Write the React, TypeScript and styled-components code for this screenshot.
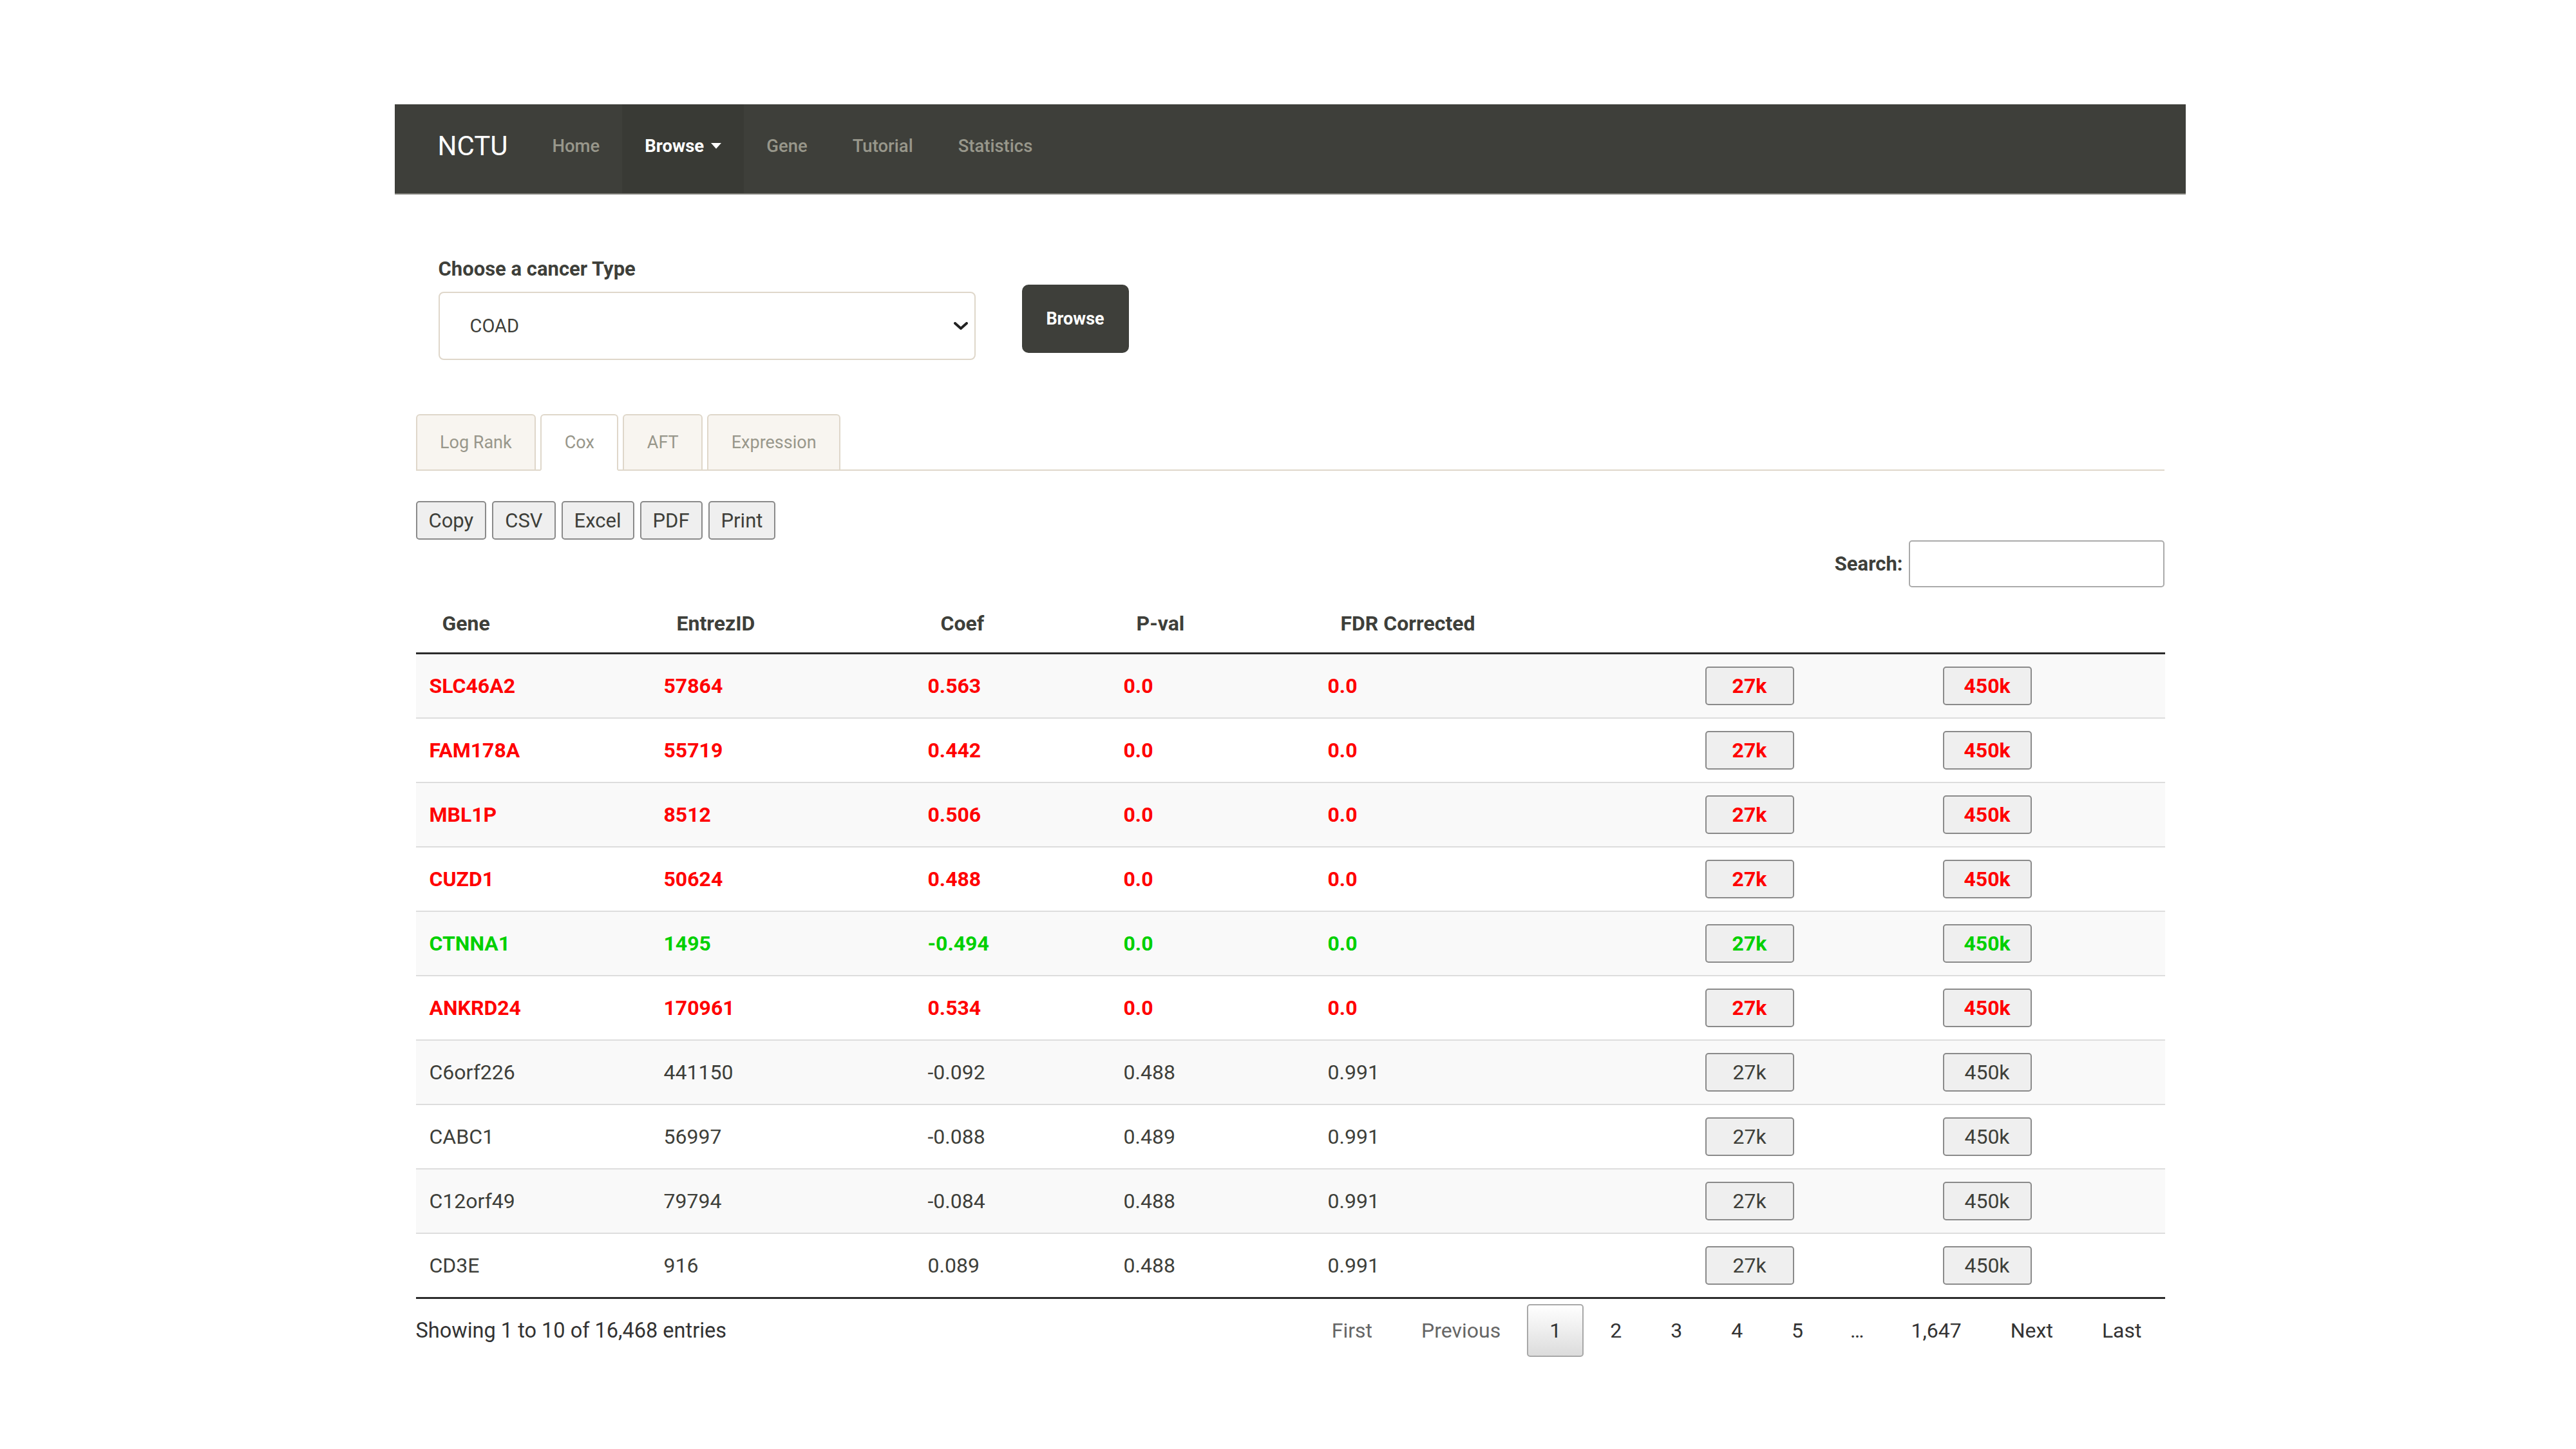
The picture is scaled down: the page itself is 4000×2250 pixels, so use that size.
import React from 'react';
import styled, { createGlobalStyle, css } from 'styled-components';

const GlobalStyle = createGlobalStyle`
  html, body {
    margin: 0;
    padding: 0;
    background: #ffffff;
  }
  body {
    font-family: Roboto, "Liberation Sans", Arial, sans-serif;
    font-size: 32px;
    color: #3e3f3a;
  }
  * {
    box-sizing: border-box;
  }
`;

const Page = styled.div`
  width: 2781px;
  margin: 0 auto;
  padding: 162px 0 120px;
  position: relative;
  left: 3px;
`;

/* ---------- navbar ---------- */

const Navbar = styled.nav`
  display: flex;
  align-items: stretch;
  height: 140px;
  padding-left: 33px;
  background: #3e3f3a;
  border-bottom: 2px solid #7d7d77;
`;

const Brand = styled.a`
  display: flex;
  align-items: center;
  padding: 0 34px 10px 34px;
  font-size: 42px;
  color: #ffffff;
  text-decoration: none;
`;

const NavLink = styled.a<{ $active?: boolean }>`
  display: flex;
  align-items: center;
  padding: 0 35px 10px;
  font-size: 27.5px;
  font-weight: 500;
  color: #98978b;
  text-decoration: none;
  ${(p) =>
    p.$active &&
    css`
      background: #393a35;
      color: #ffffff;
      font-weight: 700;
    `}
`;

const Caret = styled.span`
  display: inline-block;
  margin-left: 11px;
  border-top: 9px solid #ffffff;
  border-left: 8px solid transparent;
  border-right: 8px solid transparent;
`;

/* ---------- content ---------- */

const Main = styled.main`
  padding: 0 33px;
`;

const ChooseRow = styled.div`
  display: flex;
  align-items: flex-start;
  padding: 94px 0 0 35px;
`;

const Field = styled.div`
  display: flex;
  flex-direction: column;
`;

const Label = styled.label`
  font-size: 31px;
  font-weight: 700;
  line-height: 43px;
  color: #3e3f3a;
  margin-bottom: 14px;
`;

const SelectWrap = styled.div`
  position: relative;
  width: 834px;
  height: 106px;
`;

const Select = styled.select`
  appearance: none;
  width: 100%;
  height: 100%;
  padding: 0 60px 0 47px;
  font-family: Roboto, "Liberation Sans", Arial, sans-serif;
  font-size: 29px;
  color: #3e3f3a;
  background: #ffffff;
  border: 2px solid #dfd7ca;
  border-radius: 8px;
  outline: none;
`;

const Chevron = styled.svg`
  position: absolute;
  right: 12px;
  top: 47px;
  width: 22px;
  height: 12px;
  pointer-events: none;
`;

const BrowseButton = styled.button`
  margin: 46px 0 0 72px;
  width: 166px;
  height: 106px;
  border: none;
  border-radius: 10px;
  background: #3e3f3a;
  color: #ffffff;
  font-family: Roboto, "Liberation Sans", Arial, sans-serif;
  font-size: 27px;
  font-weight: 700;
`;

const Tabs = styled.ul`
  display: flex;
  gap: 7px;
  list-style: none;
  margin: 84px 0 0;
  padding: 0;
  border-bottom: 2px solid #dfd7ca;
`;

const Tab = styled.li<{ $active?: boolean }>`
  display: flex;
  align-items: center;
  height: 88px;
  margin-bottom: -2px;
  padding: 0 35.5px;
  font-size: 27px;
  color: #98978b;
  background: ${(p) => (p.$active ? '#ffffff' : '#f8f5f0')};
  border: 2px solid #dfd7ca;
  border-bottom-color: ${(p) => (p.$active ? '#ffffff' : '#dfd7ca')};
  border-radius: 6px 6px 0 0;
`;

const ExportBar = styled.div`
  display: flex;
  gap: 9px;
  margin-top: 47px;
`;

const NativeButton = styled.button`
  display: inline-flex;
  align-items: center;
  justify-content: center;
  font-family: Roboto, "Liberation Sans", Arial, sans-serif;
  background: #efefef;
  border: 2px solid #8a8a8a;
  border-radius: 5px;
  color: #3e3f3a;
`;

const ExportButton = styled(NativeButton)`
  height: 60px;
  padding: 0 18px;
  font-size: 31px;
`;

const SearchRow = styled.div`
  display: flex;
  justify-content: flex-end;
  align-items: center;
  gap: 9px;
  margin-top: 1px;
`;

const SearchLabel = styled.label`
  font-size: 31px;
  font-weight: 700;
  color: #3e3f3a;
`;

const SearchInput = styled.input`
  width: 397px;
  height: 73px;
  border: 2px solid #aaaaaa;
  border-radius: 5px;
  outline: none;
`;

/* ---------- table ---------- */

const Table = styled.table`
  width: 100%;
  margin-top: 10px;
  table-layout: fixed;
  border-collapse: separate;
  border-spacing: 0;
  border-bottom: 3px solid #2b2b2b;
`;

const Th = styled.th`
  height: 94px;
  padding: 0 20px 0 41px;
  text-align: left;
  font-size: 32px;
  font-weight: 700;
  color: #3e3f3a;
  border-bottom: 3px solid #2b2b2b;
`;

type Tone = 'up' | 'down' | 'none';

const toneColor: Record<Tone, string> = {
  up: '#ff0000',
  down: '#00d000',
  none: '#3e3f3a',
};

const Row = styled.tr<{ $striped: boolean }>`
  background: ${(p) => (p.$striped ? '#f9f9f9' : '#ffffff')};
  &:not(:first-child) td {
    border-top: 2px solid #dddddd;
  }
`;

const Td = styled.td<{ $tone: Tone }>`
  height: 98px;
  padding: 0 20px 0 21px;
  font-size: 32px;
  color: ${(p) => toneColor[p.$tone]};
  font-weight: ${(p) => (p.$tone === 'none' ? 400 : 700)};
  box-sizing: content-box;
  vertical-align: middle;
`;

const ArrayButton = styled(NativeButton)<{ $tone: Tone }>`
  width: 138px;
  height: 60px;
  font-size: 32px;
  color: ${(p) => toneColor[p.$tone]};
  font-weight: ${(p) => (p.$tone === 'none' ? 400 : 700)};
`;

/* ---------- footer ---------- */

const Footer = styled.div`
  display: flex;
  justify-content: space-between;
  align-items: center;
  margin-top: 8px;
`;

const Info = styled.div`
  font-size: 32.5px;
  color: #333333;
`;

const Pager = styled.div`
  display: flex;
  align-items: center;
`;

const PageButton = styled.a<{ $current?: boolean; $disabled?: boolean }>`
  display: inline-flex;
  align-items: center;
  height: 82px;
  margin-left: 6px;
  padding: 0 33px;
  font-size: 32px;
  color: ${(p) => (p.$disabled ? '#666666' : '#333333')};
  border: 2px solid transparent;
  border-radius: 5px;
  ${(p) =>
    p.$current &&
    css`
      border-color: #a8a8a8;
      background: linear-gradient(to bottom, #ffffff 0%, #dcdcdc 100%);
    `}
`;

const Ellipsis = styled.span`
  padding: 0 32px;
  margin-left: 6px;
  font-size: 32px;
  color: #333333;
`;

type Gene = {
  gene: string;
  entrez: string;
  coef: string;
  pval: string;
  fdr: string;
  tone: Tone;
};

const rows: Gene[] = [
  { gene: 'SLC46A2', entrez: '57864', coef: '0.563', pval: '0.0', fdr: '0.0', tone: 'up' },
  { gene: 'FAM178A', entrez: '55719', coef: '0.442', pval: '0.0', fdr: '0.0', tone: 'up' },
  { gene: 'MBL1P', entrez: '8512', coef: '0.506', pval: '0.0', fdr: '0.0', tone: 'up' },
  { gene: 'CUZD1', entrez: '50624', coef: '0.488', pval: '0.0', fdr: '0.0', tone: 'up' },
  { gene: 'CTNNA1', entrez: '1495', coef: '-0.494', pval: '0.0', fdr: '0.0', tone: 'down' },
  { gene: 'ANKRD24', entrez: '170961', coef: '0.534', pval: '0.0', fdr: '0.0', tone: 'up' },
  { gene: 'C6orf226', entrez: '441150', coef: '-0.092', pval: '0.488', fdr: '0.991', tone: 'none' },
  { gene: 'CABC1', entrez: '56997', coef: '-0.088', pval: '0.489', fdr: '0.991', tone: 'none' },
  { gene: 'C12orf49', entrez: '79794', coef: '-0.084', pval: '0.488', fdr: '0.991', tone: 'none' },
  { gene: 'CD3E', entrez: '916', coef: '0.089', pval: '0.488', fdr: '0.991', tone: 'none' },
];

const colWidths = [364, 410, 304, 317, 586, 369, 366];

const App: React.FC = () => {
  return (
    <Page>
      <GlobalStyle />
      <Navbar>
        <Brand href="#">NCTU</Brand>
        <NavLink href="#">Home</NavLink>
        <NavLink href="#" $active>
          Browse <Caret />
        </NavLink>
        <NavLink href="#">Gene</NavLink>
        <NavLink href="#">Tutorial</NavLink>
        <NavLink href="#">Statistics</NavLink>
      </Navbar>

      <Main>
        <ChooseRow>
          <Field>
            <Label>Choose a cancer Type</Label>
            <SelectWrap>
              <Select defaultValue="COAD">
                <option value="COAD">COAD</option>
              </Select>
              <Chevron viewBox="0 0 22 12">
                <path d="M2 2 L11 10 L20 2" fill="none" stroke="#222" strokeWidth="4" strokeLinecap="round" />
              </Chevron>
            </SelectWrap>
          </Field>
          <BrowseButton type="button">Browse</BrowseButton>
        </ChooseRow>

        <Tabs>
          <Tab>Log Rank</Tab>
          <Tab $active>Cox</Tab>
          <Tab>AFT</Tab>
          <Tab>Expression</Tab>
        </Tabs>

        <ExportBar>
          {['Copy', 'CSV', 'Excel', 'PDF', 'Print'].map((b) => (
            <ExportButton key={b} type="button">
              {b}
            </ExportButton>
          ))}
        </ExportBar>

        <SearchRow>
          <SearchLabel>Search:</SearchLabel>
          <SearchInput type="search" />
        </SearchRow>

        <Table>
          <colgroup>
            {colWidths.map((w, i) => (
              <col key={i} style={{ width: w }} />
            ))}
          </colgroup>
          <thead>
            <tr>
              <Th>Gene</Th>
              <Th>EntrezID</Th>
              <Th>Coef</Th>
              <Th>P-val</Th>
              <Th>FDR Corrected</Th>
              <Th />
              <Th />
            </tr>
          </thead>
          <tbody>
            {rows.map((r, i) => (
              <Row key={r.gene} $striped={i % 2 === 0}>
                <Td $tone={r.tone}>{r.gene}</Td>
                <Td $tone={r.tone}>{r.entrez}</Td>
                <Td $tone={r.tone}>{r.coef}</Td>
                <Td $tone={r.tone}>{r.pval}</Td>
                <Td $tone={r.tone}>{r.fdr}</Td>
                <Td $tone={r.tone}>
                  <ArrayButton type="button" $tone={r.tone}>27k</ArrayButton>
                </Td>
                <Td $tone={r.tone}>
                  <ArrayButton type="button" $tone={r.tone}>450k</ArrayButton>
                </Td>
              </Row>
            ))}
          </tbody>
        </Table>

        <Footer>
          <Info>Showing 1 to 10 of 16,468 entries</Info>
          <Pager>
            <PageButton $disabled>First</PageButton>
            <PageButton $disabled>Previous</PageButton>
            <PageButton $current>1</PageButton>
            <PageButton>2</PageButton>
            <PageButton>3</PageButton>
            <PageButton>4</PageButton>
            <PageButton>5</PageButton>
            <Ellipsis>…</Ellipsis>
            <PageButton>1,647</PageButton>
            <PageButton>Next</PageButton>
            <PageButton>Last</PageButton>
          </Pager>
        </Footer>
      </Main>
    </Page>
  );
};

export default App;
